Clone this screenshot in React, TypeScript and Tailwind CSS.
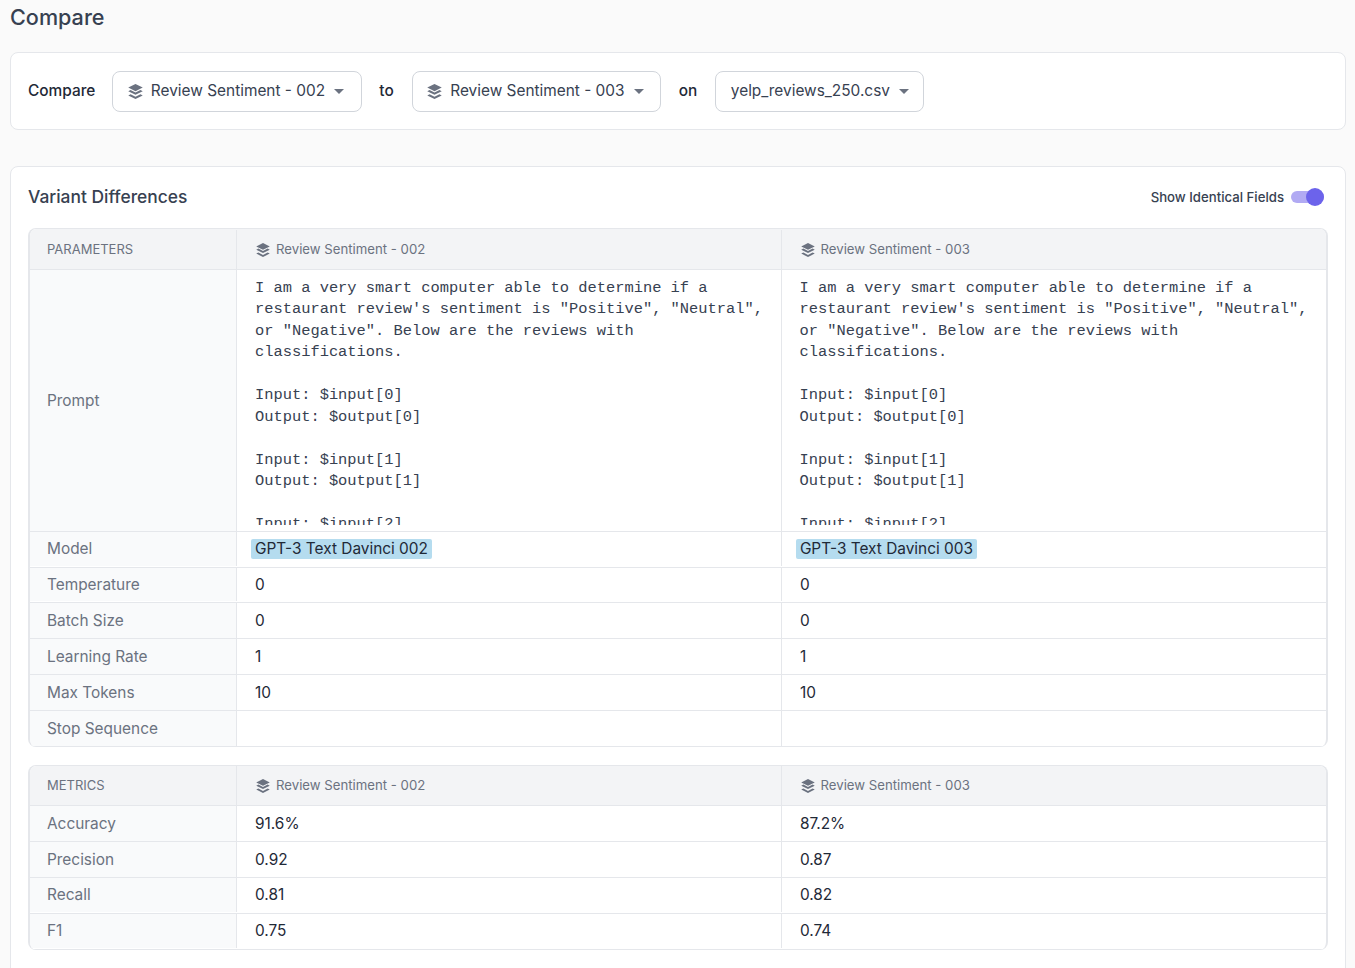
import React from 'react';

const promptText = `I am a very smart computer able to determine if a restaurant review's sentiment is "Positive", "Neutral", or "Negative". Below are the reviews with classifications.

Input: $input[0]
Output: $output[0]

Input: $input[1]
Output: $output[1]

Input: $input[2]`;

const LayersIcon: React.FC<{ size: number }> = ({ size }) => (
  <svg width={size} height={size} viewBox="1 0.5 14 14.5" fill="currentColor" className="shrink-0">
    <path d="M8 .5 15 4 8 7.5 1 4z" />
    <path d="M1 7.4l2.2-1.1L8 8.7l4.8-2.4L15 7.4 8 10.9z" />
    <path d="M1 11.5l2.2-1.1L8 12.8l4.8-2.4 2.2 1.1L8 15z" />
  </svg>
);

const Caret = () => (
  <svg width="10" height="5" viewBox="0 0 10 5" className="shrink-0">
    <path d="M0 0h10L5 5z" fill="#6b7280" />
  </svg>
);

const Select: React.FC<{ label: string; icon?: boolean; width: string }> = ({ label, icon, width }) => (
  <div className={`flex h-[41px] items-center rounded-lg border border-[#d1d5db] bg-white pl-[14.5px] ${width}`}>
    {icon && (
      <span className="mr-[8px] text-[#6b7280]">
        <LayersIcon size={15} />
      </span>
    )}
    <span className="text-[15.4px] text-[#374151]">{label}</span>
    <span className="ml-[9px]">
      <Caret />
    </span>
  </div>
);

const Row: React.FC<{ label: string; a?: React.ReactNode; b?: React.ReactNode; h: string; up?: boolean }> = ({ label, a, b, h, up }) => (
  <div className={`grid grid-cols-[207px_1fr_1fr] border-b border-[#e5e7eb] text-[15.4px] ${h} ${up ? 'pb-px' : ''}`}>
    <div className="flex items-center border-r border-[#e5e7eb] bg-[#f9fafb] pl-[17px] text-[#6b7280]">{label}</div>
    <div className="flex items-center border-r border-[#e5e7eb] pl-[18px] text-[#1f2937]">{a}</div>
    <div className="flex items-center pl-[18.4px] text-[#1f2937]">{b}</div>
  </div>
);

const HeaderRow: React.FC<{ label: string; h: string }> = ({ label, h }) => (
  <div className={`grid grid-cols-[207px_1fr_1fr] border-b border-[#e5e7eb] bg-[#f3f4f6] text-[13.2px] text-[#6b7280] ${h}`}>
    <div className="flex items-center border-r border-[#e5e7eb] pl-[17px] text-[13px]">{label}</div>
    <div className="flex items-center gap-[6px] border-r border-[#e5e7eb] pl-[19px]">
      <LayersIcon size={14} />
      Review Sentiment - 002
    </div>
    <div className="flex items-center gap-[6px] pl-[19px]">
      <LayersIcon size={14} />
      Review Sentiment - 003
    </div>
  </div>
);

const PromptCell = () => (
  <div className="h-[261px] pt-[7.8px]">
    <div className="h-[247px] overflow-hidden whitespace-pre-wrap pl-[18px] pr-[16px] font-['Liberation_Mono',monospace] text-[15.4px] leading-[21.5px] text-[#374151]">
      {promptText}
    </div>
  </div>
);

const Highlight: React.FC<{ children: string }> = ({ children }) => (
  <span className="-ml-[4px] inline-block rounded-[2px] bg-[#b5dcef] px-[4px] leading-[20px]">{children}</span>
);

export default function App() {
  return (
    <div className="min-h-[968px] overflow-hidden bg-[#fafafa] pl-[10px] pr-[9px] font-['Inter',sans-serif]">
      <h1 className="h-[34px] text-[21.6px] font-medium leading-[34px] text-[#374151]">Compare</h1>

      <div className="mt-[18px] flex h-[78px] items-center rounded-lg border border-[#e5e7eb] bg-white pl-[17px]">
        <span className="mr-[17px] text-[15.4px] font-medium text-[#1f2937]">Compare</span>
        <Select label="Review Sentiment - 002" icon width="w-[250px]" />
        <span className="ml-[17px] mr-[18px] text-[15.4px] font-medium text-[#1f2937]">to</span>
        <Select label="Review Sentiment - 003" icon width="w-[249px]" />
        <span className="mx-[18px] text-[15.4px] font-medium text-[#1f2937]">on</span>
        <Select label="yelp_reviews_250.csv" width="w-[209px]" />
      </div>

      <div className="mt-[36px] rounded-lg border border-[#e5e7eb] bg-white px-[17px] pb-[40px]">
        <div className="flex h-[61px] items-center justify-between pb-px">
          <h2 className="text-[17.4px] font-medium text-[#374151]">Variant Differences</h2>
          <div className="flex items-center gap-[7px] pr-[4px]">
            <span className="mt-px text-[13.2px] font-medium text-[#374151]">Show Identical Fields</span>
            <div className="relative h-[12px] w-[33px] rounded-full bg-[#b1aaf3]">
              <div className="absolute -top-[3px] right-0 h-[18px] w-[18px] rounded-full bg-[#6c63eb]" />
            </div>
          </div>
        </div>

        <div className="overflow-hidden rounded-lg border-x-2 border-t border-[#e5e7eb]">
          <HeaderRow label="PARAMETERS" h="h-[41px] pt-px" />
          <div className="grid grid-cols-[207px_1fr_1fr] border-b border-[#e5e7eb]">
            <div className="flex items-center border-r border-[#e5e7eb] bg-[#f9fafb] pl-[17px] text-[15.4px] text-[#6b7280]">Prompt</div>
            <div className="border-r border-[#e5e7eb]">
              <PromptCell />
            </div>
            <PromptCell />
          </div>
          <Row label="Model" a={<Highlight>GPT-3 Text Davinci 002</Highlight>} b={<Highlight>GPT-3 Text Davinci 003</Highlight>} h="h-[36px]" up />
          <Row label="Temperature" a="0" b="0" h="h-[35px]" up />
          <Row label="Batch Size" a="0" b="0" h="h-[36px]" />
          <Row label="Learning Rate" a="1" b="1" h="h-[36px]" />
          <Row label="Max Tokens" a="10" b="10" h="h-[36px]" />
          <Row label="Stop Sequence" h="h-[36px]" />
        </div>

        <div className="mt-[18px] overflow-hidden rounded-lg border-x-2 border-t border-[#e5e7eb]">
          <HeaderRow label="METRICS" h="h-[40px]" />
          <Row label="Accuracy" a="91.6%" b="87.2%" h="h-[36px]" />
          <Row label="Precision" a="0.92" b="0.87" h="h-[36px]" />
          <Row label="Recall" a="0.81" b="0.82" h="h-[36px]" up />
          <Row label="F1" a="0.75" b="0.74" h="h-[36px]" up />
        </div>
      </div>
    </div>
  );
}
